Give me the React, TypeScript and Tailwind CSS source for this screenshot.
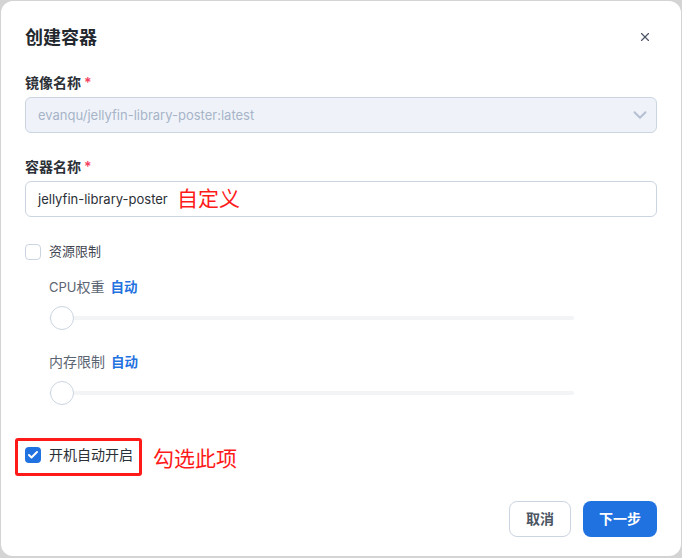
import { ChevronDown, X, Check } from "lucide-react"

const font = { fontFamily: '"Inter", "Noto Sans CJK SC", sans-serif' }

function Label({ text }: { text: string }) {
  return (
    <div className="flex h-5 items-center text-sm leading-5 font-semibold text-[#2b2f36]">
      {text}
      <span className="ml-[3px] text-sm text-[#f43f5e]">*</span>
    </div>
  )
}

function SliderRow({ label, latin }: { label: string; latin?: string }) {
  return (
    <div className="w-[525px]">
      <div className="flex h-5 items-center text-sm leading-5">
        <span className="text-[#5b6472]">
          {latin && <span className="text-[13px]">{latin}</span>}
          {label}
        </span>
        <span className="ml-[6px] font-semibold text-[13.5px] text-[#1f72e0]">自动</span>
      </div>
      <div className="relative mt-[9px] flex h-6 items-center">
        <div className="h-1 w-full rounded-full bg-[#f3f4f6]" />
        <div className="absolute left-px top-0 h-6 w-6 rounded-full border border-[#cbd5e1] bg-white" />
      </div>
    </div>
  )
}

export default function App() {
  return (
    <div className="h-[558px] w-[682px] overflow-hidden bg-[#d4d4d4] pl-px pt-px pr-px" style={font}>
      <div className="relative flex h-[555px] flex-col rounded-xl bg-white pl-6 pr-6 pt-[26px]">
        <div className="flex h-[22px] items-center justify-between">
          <h2 className="text-lg leading-[22px] font-bold text-[#23272e]">创建容器</h2>
          <X className="mr-[5px] mb-0.5 h-3.5 w-3.5 text-[#4b5563]" strokeWidth={2} />
        </div>

        <div className="mt-[24px]">
          <Label text="镜像名称" />
        </div>
        <div className="mt-1 flex h-9 items-center justify-between rounded-md border border-[#cbd5e1] bg-[#eff3f9] pl-3 pr-[5px] pt-0.5 text-[13px] text-[#a7b4c8]">
          <span>evanqu/jellyfin-library-poster:latest</span>
          <ChevronDown className="mb-0.5 h-[22px] w-[22px] text-[#b4c0d2]" strokeWidth={2.2} />
        </div>

        <div className="mt-6">
          <Label text="容器名称" />
        </div>
        <div className="relative mt-1 flex h-9 items-center rounded-md border border-[#cbd5e1] bg-white pl-3 pt-0.5 text-[13px] text-[#2b2f36]">
          <span>jellyfin-library-poster</span>
          <span className="absolute left-[151px] top-[3px] text-[21px] leading-7 text-[#ff1a1a]">自定义</span>
        </div>

        <label className="mt-[27px] flex h-4 items-center gap-2 text-[13px] text-[#3f4651]">
          <span className="h-4 w-4 rounded border border-[#cbd5e1] bg-white" />
          资源限制
        </label>

        <div className="mt-[17px] flex flex-col gap-[22px] pl-6">
          <SliderRow label="权重" latin="CPU" />
          <SliderRow label="内存限制" />
        </div>

        <label className="relative mt-[42px] flex h-4 items-center gap-2 text-sm text-[#2b2f36]">
          <span className="flex h-4 w-4 items-center justify-center rounded bg-[#1f72e0]">
            <Check className="h-3 w-3 text-white" strokeWidth={4} />
          </span>
          开机自动开启
          <span className="absolute left-[-10px] top-[-9px] h-[38px] w-[127px] rounded-[3px] border-[3px] border-[#ff1a1a]" />
          <span className="absolute left-[128px] top-[-2px] text-[21px] leading-7 text-[#ff1a1a]">勾选此项</span>
        </label>

        <div className="mt-[38px] flex justify-end gap-3">
          <button className="h-9 w-[62px] rounded-lg border border-[#cbd5e1] bg-white text-sm font-semibold text-[#4b5563]">取消</button>
          <button className="h-9 w-[74px] rounded-lg bg-[#1f72e0] text-sm font-semibold text-white">下一步</button>
        </div>
      </div>
    </div>
  )
}
